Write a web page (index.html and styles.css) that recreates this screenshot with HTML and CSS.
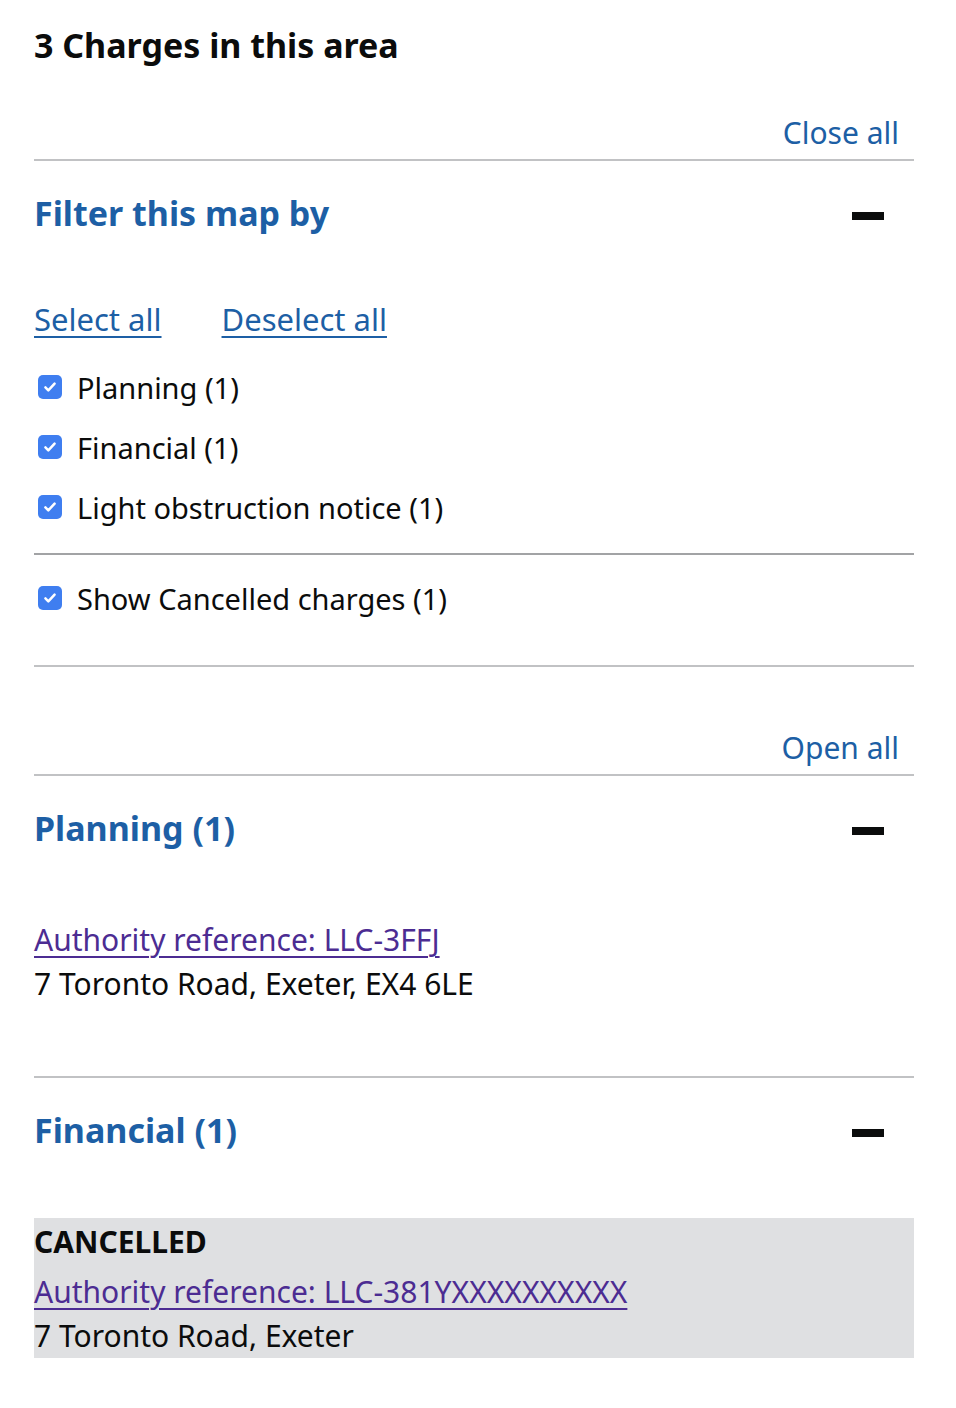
FILE: index.html
```html
<!DOCTYPE html>
<html lang="en">
<head>
<meta charset="utf-8">
<title>3 Charges in this area</title>
<link rel="stylesheet" href="styles.css">
</head>
<body>
<main class="panel">
  <h1 class="title">3 Charges in this area</h1>

  <div class="accordion">
    <div class="accordion-controls">
      <a class="ctl-link" href="#">Close all</a>
    </div>
    <section class="acc-section">
      <div class="acc-header">
        <h2 class="acc-heading">Filter this map by</h2>
        <span class="acc-icon"></span>
      </div>
      <div class="acc-body filter-body">
        <div class="select-row">
          <a class="ulink" href="#">Select all</a>
          <a class="ulink" href="#">Deselect all</a>
        </div>
        <ul class="checks">
          <li class="check"><span class="box"><svg viewBox="0 0 24 24"><path d="M6.5 12.5l3.5 3.5 7.5-8" /></svg></span>Planning (1)</li>
          <li class="check"><span class="box"><svg viewBox="0 0 24 24"><path d="M6.5 12.5l3.5 3.5 7.5-8" /></svg></span>Financial (1)</li>
          <li class="check"><span class="box"><svg viewBox="0 0 24 24"><path d="M6.5 12.5l3.5 3.5 7.5-8" /></svg></span>Light obstruction notice (1)</li>
        </ul>
        <div class="cancel-row">
          <div class="check"><span class="box"><svg viewBox="0 0 24 24"><path d="M6.5 12.5l3.5 3.5 7.5-8" /></svg></span>Show Cancelled charges (1)</div>
        </div>
      </div>
    </section>
  </div>

  <div class="accordion results">
    <div class="accordion-controls">
      <a class="ctl-link" href="#">Open all</a>
    </div>
    <section class="acc-section">
      <div class="acc-header">
        <h2 class="acc-heading">Planning (1)</h2>
        <span class="acc-icon"></span>
      </div>
      <div class="acc-body charge-body">
        <a class="ref" href="#">Authority reference: LLC-3FFJ</a>
        <p class="addr">7 Toronto Road, Exeter, EX4 6LE</p>
      </div>
    </section>
    <section class="acc-section last">
      <div class="acc-header">
        <h2 class="acc-heading">Financial (1)</h2>
        <span class="acc-icon"></span>
      </div>
      <div class="acc-body cancelled">
        <strong class="tag">CANCELLED</strong>
        <a class="ref" href="#">Authority reference: LLC-381YXXXXXXXXXX</a>
        <p class="addr">7 Toronto Road, Exeter</p>
      </div>
    </section>
  </div>
</main>
</body>
</html>
```

FILE: styles.css
```css
* { box-sizing: border-box; }

html, body {
  margin: 0;
  padding: 0;
  background: #ffffff;
}

body {
  font-family: "Noto Sans", "Liberation Sans", sans-serif;
  color: #0b0c0c;
}

.panel {
  width: 880px;
  margin-left: 34px;
  padding-top: 24px;
}

.title {
  margin: 0;
  font-size: 34px;
  line-height: 42px;
  font-weight: 700;
}

.accordion-controls {
  display: flex;
  justify-content: flex-end;
  padding: 0 15px 6px 0;
  border-bottom: 2px solid #c1c2c4;
}

.accordion {
  margin-top: 47px;
}

.accordion.results {
  margin-top: 61px;
}

.ctl-link {
  font-size: 30px;
  line-height: 40px;
  color: #1d5fa5;
  text-decoration: none;
}

.acc-section {
  border-bottom: 2px solid #c1c2c4;
}

.acc-section.last {
  border-bottom: none;
}

.acc-header {
  display: flex;
  align-items: center;
  justify-content: space-between;
  padding: 32px 30px 0 0;
}

.acc-heading {
  margin: 0;
  font-size: 34px;
  line-height: 40px;
  font-weight: 700;
  color: #1d5fa5;
}

.acc-icon {
  width: 32px;
  height: 8px;
  background: #0b0c0c;
  margin-top: 6px;
}

.filter-body {
  padding-top: 66px;
}

.select-row {
  display: flex;
  gap: 60px;
  height: 40px;
  align-items: center;
}

.ulink {
  font-size: 31px;
  line-height: 40px;
  color: #1d5fa5;
  text-decoration: underline;
  text-decoration-thickness: 2px;
  text-underline-offset: 5px;
}

.checks {
  list-style: none;
  margin: 18px 0 0;
  padding: 0 0 16px;
  border-bottom: 2px solid #a2a3a5;
}

.check {
  display: flex;
  align-items: center;
  height: 60px;
  font-size: 29px;
  padding-left: 4px;
}

.box {
  width: 24px;
  height: 24px;
  border-radius: 5px;
  background: #3f7ef0;
  margin-right: 15px;
  display: flex;
  align-items: center;
  justify-content: center;
}

.box svg {
  width: 20px;
  height: 20px;
  fill: none;
  stroke: #ffffff;
  stroke-width: 3;
  stroke-linecap: round;
  stroke-linejoin: round;
}

.cancel-row {
  padding: 13px 0 37px;
}

.charge-body {
  padding: 70px 0 70px;
}

.ref {
  display: block;
  font-size: 30px;
  line-height: 44px;
  color: #4c2c92;
  text-decoration: underline;
  text-decoration-thickness: 2px;
  text-underline-offset: 5px;
}

.addr {
  margin: 0;
  font-size: 30px;
  line-height: 44px;
}

.cancelled {
  margin-top: 68px;
  background: #dfe0e2;
  padding: 2px 0 0;
}

.tag {
  display: block;
  font-size: 30px;
  line-height: 44px;
  font-weight: 700;
  margin-bottom: 6px;
}
```
